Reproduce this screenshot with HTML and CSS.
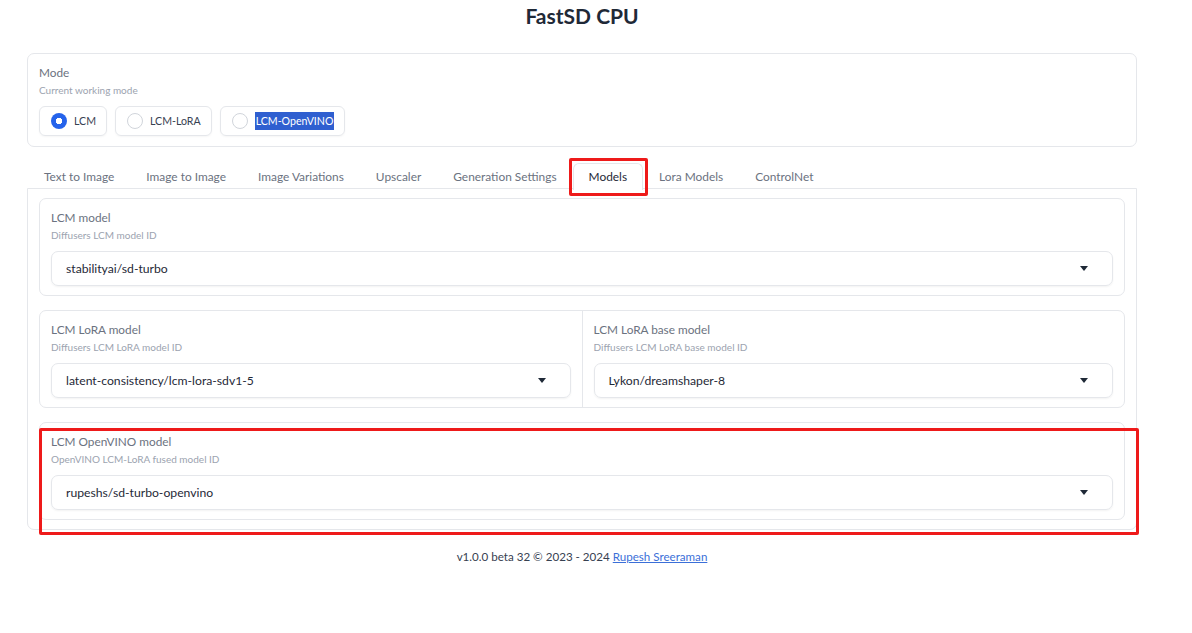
FILE: index.html
```html
<!DOCTYPE html>
<html>
<head>
    <title>FastSD CPU</title>
    <link rel="stylesheet" href="styles.css">
</head>
<body>
    <div class="container">
        <h1>FastSD CPU</h1>

        <div class="block mode-block">
            <div class="label">Mode</div>
            <div class="info">Current working mode</div>
            <div class="radio-group">
                <label class="radio-item"><span class="radio checked"></span>LCM</label>
                <label class="radio-item"><span class="radio"></span>LCM-LoRA</label>
                <label class="radio-item"><span class="radio"></span><span class="selected-text">LCM-OpenVINO</span></label>
            </div>
        </div>

        <div class="tabs">
            <div class="tab">Text to Image</div>
            <div class="tab">Image to Image</div>
            <div class="tab">Image Variations</div>
            <div class="tab">Upscaler</div>
            <div class="tab">Generation Settings</div>
            <div class="tab active">Models<span class="mark mark-tab"></span></div>
            <div class="tab">Lora Models</div>
            <div class="tab">ControlNet</div>
        </div>

        <div class="tab-panel">
            <div class="block card">
                <div class="label">LCM model</div>
                <div class="info">Diffusers LCM model ID</div>
                <div class="dropdown">
                    <span>stabilityai/sd-turbo</span>
                    <span class="caret"></span>
                </div>
            </div>

            <div class="block row">
                <div class="col">
                    <div class="label">LCM LoRA model</div>
                    <div class="info">Diffusers LCM LoRA model ID</div>
                    <div class="dropdown">
                        <span>latent-consistency/lcm-lora-sdv1-5</span>
                        <span class="caret"></span>
                    </div>
                </div>
                <div class="col">
                    <div class="label">LCM LoRA base model</div>
                    <div class="info">Diffusers LCM LoRA base model ID</div>
                    <div class="dropdown">
                        <span>Lykon/dreamshaper-8</span>
                        <span class="caret"></span>
                    </div>
                </div>
            </div>

            <div class="block card">
                <div class="label">LCM OpenVINO model</div>
                <div class="info">OpenVINO LCM-LoRA fused model ID</div>
                <div class="dropdown">
                    <span>rupeshs/sd-turbo-openvino</span>
                    <span class="caret"></span>
                </div>
                <span class="mark mark-card"></span>
            </div>
        </div>

        <div class="footer">
            v1.0.0 beta 32 © 2023 - 2024 <a href="#">Rupesh Sreeraman</a>
        </div>
    </div>
</body>
</html>
```

FILE: styles.css
```css
body {
    font-family: Lato, "Liberation Sans", sans-serif;
    margin: 0;
    background: #fff;
    color: #1f2937;
}
.container {
    width: 1110px;
    margin-left: 27px;
}
h1 {
    margin: 0;
    padding-top: 3px;
    height: 50px;
    font-size: 21px;
    font-weight: 700;
    text-align: center;
    color: #1f2937;
    line-height: 26px;
}
.block {
    border: 1px solid #e5e7eb;
    border-radius: 7px;
    background: #fff;
}
.label {
    font-size: 11.8px;
    color: #6b7280;
    line-height: 18px;
}
.info {
    font-size: 10px;
    color: #9ca3af;
    line-height: 16px;
    margin-bottom: 8px;
}
.mode-block {
    padding: 10px 11px;
}
.radio-group {
    display: flex;
    gap: 8px;
}
.radio-item {
    display: flex;
    align-items: center;
    gap: 7px;
    height: 28px;
    padding: 0 10px 0 11px;
    border: 1px solid #e5e7eb;
    border-radius: 6px;
    font-size: 10.6px;
    color: #374151;
    box-shadow: 0 1px 2px rgba(0,0,0,0.04);
}
.radio {
    width: 14px;
    height: 14px;
    border: 1px solid #d1d5db;
    border-radius: 50%;
    background: #fff;
}
.radio.checked {
    width: 16px;
    height: 16px;
    border: none;
    background: radial-gradient(circle, #fff 0 3px, #2563eb 3.5px);
}
.selected-text {
    background: #2f5fd0;
    color: #fff;
    padding: 3px 1px;
}
.tabs {
    display: flex;
    margin-top: 16px;
    padding-left: 1px;
    height: 25px;
}
.tab {
    position: relative;
    padding: 4px 15px 0;
    font-size: 11.9px;
    color: #6b7280;
    line-height: 18px;
    border: 1px solid transparent;
    border-bottom: none;
    border-radius: 6px 6px 0 0;
}
.tab.active {
    color: #1f2937;
    border-color: #e5e7eb;
    background: #fff;
    height: 22px;
    z-index: 1;
}
.mark {
    position: absolute;
    border: 3px solid #ee1a1a;
    border-radius: 2px;
}
.mark-tab {
    left: -5px;
    top: -6px;
    width: 73px;
    height: 32px;
}
.tab-panel {
    border: 1px solid #e5e7eb;
    border-radius: 0 0 7px 7px;
    padding: 9px 11px;
    display: flex;
    flex-direction: column;
    gap: 14px;
}
.card {
    position: relative;
    padding: 10px 11px 9px;
}
.dropdown {
    display: flex;
    justify-content: space-between;
    align-items: center;
    height: 33px;
    padding: 0 24px 0 14px;
    border: 1px solid #e5e7eb;
    border-radius: 7px;
    font-size: 12.2px;
    color: #1f2937;
    box-shadow: 0 1px 2px rgba(0,0,0,0.05);
}
.caret {
    width: 0;
    height: 0;
    border-left: 4px solid transparent;
    border-right: 4px solid transparent;
    border-top: 5px solid #1f2937;
}
.row {
    display: flex;
}
.col {
    flex: 1;
    padding: 10px 11px 9px;
}
.col + .col {
    border-left: 1px solid #e5e7eb;
}
.mark-card {
    left: -1px;
    top: 5px;
    width: 1094px;
    height: 101px;
}
.footer {
    text-align: center;
    font-size: 11.6px;
    color: #374151;
    margin-top: 20px;
}
.footer a {
    color: #3b6fd8;
}
```
